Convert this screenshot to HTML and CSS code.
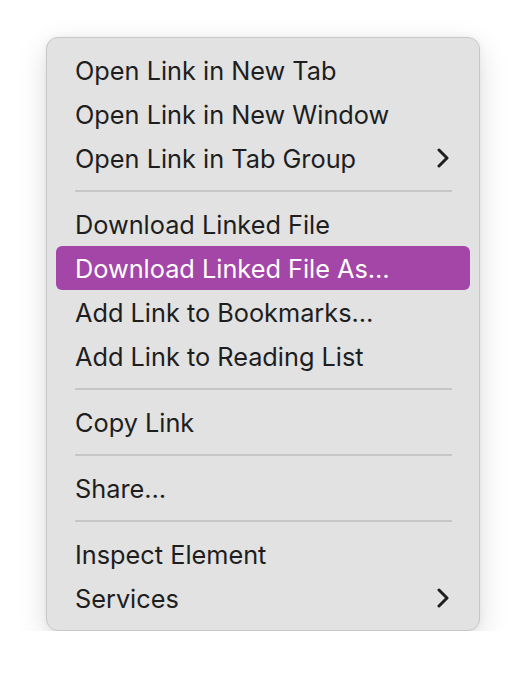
FILE: index.html
```html
<!DOCTYPE html>
<html lang="en">
  <head>
    <meta charset="UTF-8" />
    <meta name="viewport" content="width=device-width, initial-scale=1.0" />
    <title>Context Menu</title>
    <link rel="stylesheet" href="styles.css">
  </head>
  <body>
    <div class="menu">
      <div class="item">Open Link in New Tab</div>
      <div class="item">Open Link in New Window</div>
      <div class="item">
        <span>Open Link in Tab Group</span>
        <svg class="chevron" width="12" height="20" viewBox="0 0 12 20">
          <path d="M2 2 L10 10 L2 18" />
        </svg>
      </div>
      <div class="sep"></div>
      <div class="item">Download Linked File</div>
      <div class="item active">Download Linked File As…</div>
      <div class="item">Add Link to Bookmarks…</div>
      <div class="item">Add Link to Reading List</div>
      <div class="sep"></div>
      <div class="item">Copy Link</div>
      <div class="sep"></div>
      <div class="item">Share…</div>
      <div class="sep"></div>
      <div class="item">Inspect Element</div>
      <div class="item">
        <span>Services</span>
        <svg class="chevron" width="12" height="20" viewBox="0 0 12 20">
          <path d="M2 2 L10 10 L2 18" />
        </svg>
      </div>
    </div>
  </body>
</html>
```

FILE: styles.css
```css
body {
  margin: 0;
  padding: 37px 0 0 46px;
  background: #ffffff;
  font-family: Inter, "Noto Sans", sans-serif;
}

.menu {
  width: 434px;
  box-sizing: border-box;
  padding: 10px 9px;
  background-color: #e1e2e1;
  border: 1px solid #c6c7c6;
  border-radius: 12px;
  box-shadow: 0 10px 30px rgba(0, 0, 0, 0.14), 0 0 6px rgba(0, 0, 0, 0.05);
}

.item {
  height: 44px;
  display: flex;
  align-items: center;
  justify-content: space-between;
  padding: 0 21px 0 19px;
  border-radius: 6px;
  font-size: 25.3px;
  color: #1e1e1e;
}

.item.active {
  background-color: #a346a8;
  color: #ffffff;
}

.chevron path {
  fill: none;
  stroke: #1e1e1e;
  stroke-width: 3;
  stroke-linecap: round;
  stroke-linejoin: round;
}

.sep {
  height: 2px;
  margin: 10px 18px 10px 19px;
  background-color: #c5c6c5;
}
```
